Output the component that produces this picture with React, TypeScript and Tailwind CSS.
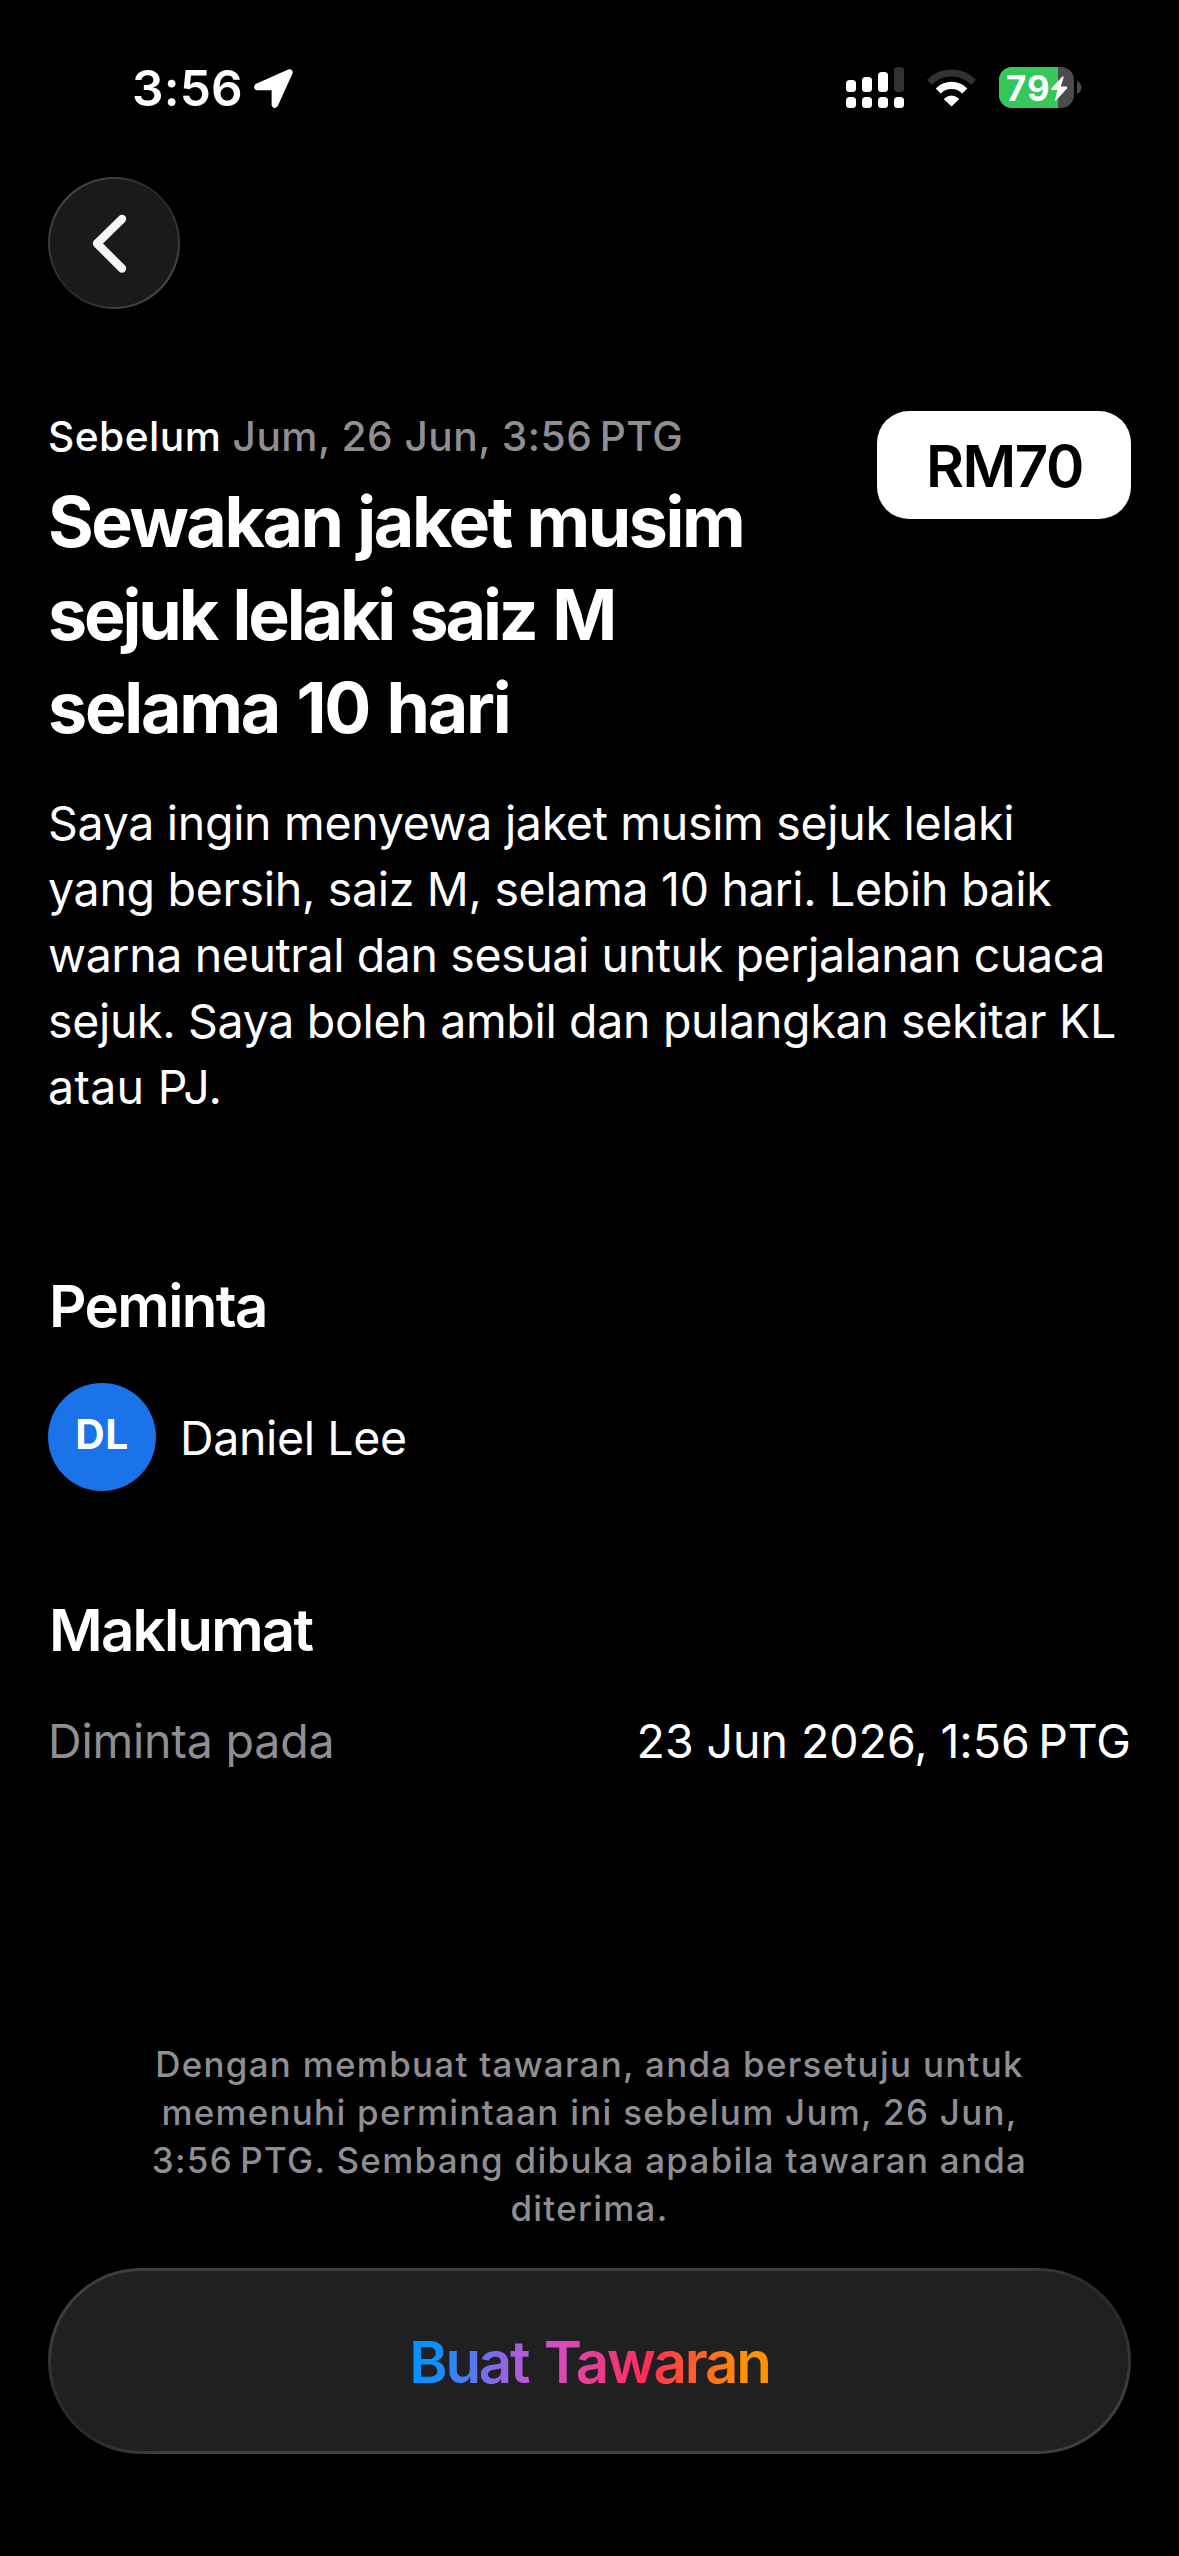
const titleLines = [
  { text: 'Sewakan jaket musim', spacing: 'tracking-[-2.4px] [word-spacing:1.5px]' },
  { text: 'sejuk lelaki saiz M', spacing: 'tracking-[-3.1px] [word-spacing:3px]' },
  { text: 'selama 10 hari', spacing: 'tracking-[-2.2px] [word-spacing:3px]' },
]

const description = [
  { text: 'Saya ingin menyewa jaket musim sejuk lelaki', spacing: 'tracking-[-0.31px]' },
  { text: 'yang bersih, saiz M, selama 10 hari. Lebih baik', spacing: 'tracking-[-0.32px]' },
  { text: 'warna neutral dan sesuai untuk perjalanan cuaca', spacing: 'tracking-[-0.4px]' },
  { text: 'sejuk. Saya boleh ambil dan pulangkan sekitar KL', spacing: 'tracking-[-0.33px]' },
  { text: 'atau PJ.', spacing: 'tracking-[0.3px]' },
]

const disclaimer = [
  'Dengan membuat tawaran, anda bersetuju untuk',
  'memenuhi permintaan ini sebelum Jum, 26 Jun,',
  '3:56\u202fPTG. Sembang dibuka apabila tawaran anda',
  'diterima.',
]

function SignalIcon() {
  return (
    <svg width="58" height="43" viewBox="0 0 58 43" fill="#fff">
      <rect x="0" y="13" width="10" height="12" rx="3.5" />
      <rect x="16" y="10" width="10" height="15" rx="3.5" />
      <rect x="32" y="5" width="10" height="20" rx="3.5" />
      <rect x="48" y="0" width="10" height="25" rx="3.5" fill="#323232" />
      <rect x="0" y="30" width="10" height="11" rx="3.5" />
      <rect x="16" y="30" width="10" height="11" rx="3.5" />
      <rect x="32" y="30" width="10" height="11" rx="3.5" />
      <rect x="48" y="30" width="10" height="11" rx="3.5" />
    </svg>
  )
}

function WifiIcon() {
  return (
    <svg width="51" height="43" viewBox="0 0 51 43" fill="none">
      <path d="M3.4 15.2A31 31 0 0 1 47.6 15.2" stroke="#323232" strokeWidth="7" />
      <path d="M12.2 24A18.7 18.7 0 0 1 38.8 24" stroke="#fff" strokeWidth="7.2" />
      <path d="M18.2 32.6Q17.6 32 18.3 31.5Q25.5 25.4 32.7 31.5Q33.4 32 32.8 32.6L26 39Q25.5 39.4 25 39Z" fill="#fff" />
    </svg>
  )
}

function Battery({ level }: { level: number }) {
  return (
    <div className="flex items-center gap-[3px] mb-[2px]">
      <div className="relative w-[75px] h-[41px] rounded-[13px] overflow-hidden bg-[#4b4b4b]">
        <div className="absolute inset-y-0 left-0 bg-[#34c759]" style={{ width: `${level}%` }} />
        <span className="absolute left-[7px] top-0 text-[34.8px] leading-[42px] font-bold tracking-[1px]">{level}</span>
        <svg className="absolute inset-0" width="75" height="41" viewBox="0 0 75 41">
          <path
            d="M63.4 9.6L52.2 21.6Q51.4 23 52.8 23H58.4L55.9 33Q55.9 34.6 57 33.6L68.2 21.2Q68.8 19.6 67.4 19.6H61.8L64.6 10.4Q64.6 8.8 63.4 9.6Z"
            fill="#fff"
          />
        </svg>
      </div>
      <svg width="5" height="13" viewBox="0 0 5 13">
        <path d="M0 0Q4.4 2 4.4 6.5Q4.4 11 0 13Z" fill="#4b4b4b" />
      </svg>
    </div>
  )
}

function StatusBar() {
  return (
    <div className="h-[177px] flex items-center pl-[132px] pr-[97px]">
      <span className="w-[122px] pb-[2px] text-[49.5px] leading-[60px] font-semibold tracking-[0.2px]">3:56</span>
      <svg width="39" height="39" viewBox="0 0 39 39" fill="#fff">
        <path d="M34.2 0.5L2.2 14.8C-1 16.4-0.4 21 3.4 21.2H17.6V35.4C17.8 39.6 22.4 40 24 36.6L38.4 4.8C39.6 1.8 37.2-0.8 34.2 0.5Z" />
      </svg>
      <div className="ml-auto flex items-center gap-[22px]">
        <SignalIcon />
        <WifiIcon />
        <Battery level={79} />
      </div>
    </div>
  )
}

function BackButton() {
  return (
    <button className="block w-[132px] h-[132px] p-[2px] rounded-full bg-[linear-gradient(135deg,#4c4c4c_10%,#242424_50%,#4c4c4c_90%)]">
      <span className="block rounded-full bg-[#1a1a1a]">
        <svg width="128" height="128" viewBox="2 2 128 128" fill="none">
          <path d="M74 42L49 66.5L74 91.5" stroke="#f5f5f5" strokeWidth="8.4" strokeLinecap="round" strokeLinejoin="round" />
        </svg>
      </span>
    </button>
  )
}

export default function App() {
  return (
    <div className="w-[1179px] h-[2556px] bg-black text-white font-['Inter',sans-serif] whitespace-nowrap overflow-hidden">
      <StatusBar />

      <main className="px-[48px]">
        <BackButton />

        <div className="mt-[97px] flex justify-between items-start">
          <div>
            <p className="pt-[1px] text-[40.7px] leading-[60px] font-medium tracking-[0.45px]">
              Sebelum <span className="text-[#8e8e93]">Jum, 26 Jun, 3:56{'\u202f'}PTG</span>
            </p>
            <h1 className="mt-[8px] text-[69.8px] leading-[93px] font-bold">
              {titleLines.map((line) => (
                <span key={line.text} className={`block ${line.spacing}`}>{line.text}</span>
              ))}
            </h1>
          </div>
          <div className="mt-[5px] w-[254px] h-[108px] pt-[2px] pl-[1px] rounded-[32px] bg-white text-black flex items-center justify-center">
            <span className="text-[58.2px] leading-[72px] font-semibold tracking-[-1.4px]">RM70</span>
          </div>
        </div>

        <p className="mt-[36px] text-[46.5px] leading-[66px]">
          {description.map((line) => (
            <span key={line.text} className={`block ${line.spacing}`}>{line.text}</span>
          ))}
        </p>

        <h2 className="mt-[150px] pl-[1px] text-[58.2px] leading-[72px] font-semibold tracking-[-1.59px]">Peminta</h2>
        <div className="mt-[41px] flex items-center gap-[24px]">
          <div className="w-[108px] h-[108px] pb-[4px] rounded-full bg-[#1a73e8] flex items-center justify-center">
            <span className="text-[40.7px] font-bold tracking-[0.6px]">DL</span>
          </div>
          <span className="pt-[2px] text-[46.5px] leading-[66px] tracking-[-0.36px]">Daniel Lee</span>
        </div>

        <h2 className="mt-[103px] pl-[1px] text-[58.2px] leading-[72px] font-semibold tracking-[-1.77px]">Maklumat</h2>
        <div className="mt-[42px] flex justify-between text-[46.5px] leading-[66px]">
          <span className="text-[#8e8e93] tracking-[-0.18px]">Diminta pada</span>
          <span className="tracking-[-0.05px]">23 Jun 2026, 1:56{'\u202f'}PTG</span>
        </div>

        <p className="mt-[266px] text-center text-[34.9px] leading-[48px] font-medium tracking-[1.3px] text-[#8e8e93]">
          {disclaimer.map((line) => (
            <span key={line} className="block">{line}</span>
          ))}
        </p>

        <button className="mt-[36px] block w-full h-[186px] p-[3px] rounded-full bg-[#3e3e40] bg-[radial-gradient(circle_at_35px_145px,#29292b_0,#29292b_20px,transparent_90px),radial-gradient(circle_at_1048px_41px,#29292b_0,#29292b_20px,transparent_90px)]">
          <span className="h-full rounded-full bg-[#202022] flex items-center justify-center">
            <span className="pt-[2px] text-[58.2px] leading-[72px] font-semibold tracking-[-2.2px] [word-spacing:3px] text-transparent bg-clip-text bg-[linear-gradient(100deg,#0a91ff_8%,#cc52d4_36%,#ff2d55_66%,#ff9200_92%)]">
              Buat Tawaran
            </span>
          </span>
        </button>
      </main>
    </div>
  )
}
